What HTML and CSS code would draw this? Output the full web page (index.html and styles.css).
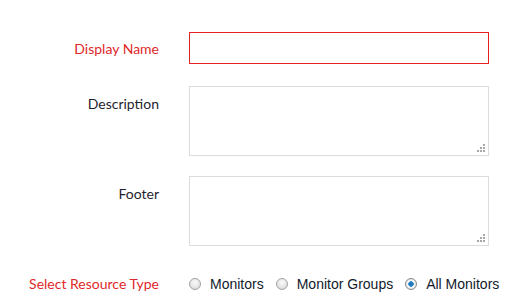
FILE: index.html
```html
<!DOCTYPE html>
<html lang="en">
<head>
    <meta charset="UTF-8">
    <meta name="viewport" content="width=device-width, initial-scale=1.0">
    <title>Status Page Settings</title>
    <link rel="stylesheet" href="styles.css">
</head>
<body>
    <form class="settings-form">
        <label class="field-label required field-label-input" for="display_name">Display Name</label>
        <div class="field">
            <input type="text" id="display_name" name="display_name" class="text-input invalid">
        </div>

        <label class="field-label field-label-area row-description" for="description">Description</label>
        <div class="field area-wrap row-description">
            <textarea id="description" name="description" class="text-area"></textarea>
            <span class="grip"></span>
        </div>

        <label class="field-label field-label-area" for="footer">Footer</label>
        <div class="field area-wrap">
            <textarea id="footer" name="footer" class="text-area"></textarea>
            <span class="grip"></span>
        </div>

        <span class="field-label required field-label-radio row-radio">Select Resource Type</span>
        <div class="field radio-group row-radio">
            <label class="radio-option"><input type="radio" name="resource_type" value="monitors"> Monitors</label>
            <label class="radio-option"><input type="radio" name="resource_type" value="groups"> Monitor Groups</label>
            <label class="radio-option"><input type="radio" name="resource_type" value="all" checked> All Monitors</label>
        </div>
    </form>
</body>
</html>
```

FILE: styles.css
```css
body {
    margin: 0;
    background-color: #fff;
    font-family: Lato, "Open Sans", sans-serif;
    color: #222;
}
.settings-form {
    display: grid;
    grid-template-columns: 159px 300px;
    column-gap: 30px;
    row-gap: 20px;
    padding-top: 32px;
}
.row-description {
    margin-top: 2px;
}
.row-radio {
    margin-top: 8px;
}
.field-label {
    text-align: right;
    font-size: 14px;
    color: #1f2330;
}
.field-label.required {
    color: #e0282a;
}
.field-label-input {
    box-sizing: border-box;
    height: 32px;
    padding-top: 2px;
    line-height: 30px;
}
.field-label-area {
    padding-top: 9px;
}
.field-label-radio {
    line-height: 20px;
}
.text-input {
    display: block;
    box-sizing: border-box;
    width: 300px;
    height: 32px;
    border: 1px solid #ddd;
    margin: 0;
    padding: 4px 8px;
    font-size: 14px;
    outline: none;
}
.text-input.invalid {
    border-color: #e42124;
}
.area-wrap {
    position: relative;
    height: 70px;
}
.text-area {
    display: block;
    box-sizing: border-box;
    width: 300px;
    height: 70px;
    border: 1px solid #dcdcdc;
    margin: 0;
    padding: 4px 8px;
    font-size: 14px;
    outline: none;
    resize: none;
}
.grip {
    position: absolute;
    right: 4px;
    bottom: 4px;
    width: 2px;
    height: 2px;
    background: #a8a8a8;
    box-shadow: -3px 0 #a8a8a8, -6px 0 #a8a8a8, 0 -3px #a8a8a8, -3px -3px #a8a8a8, 0 -6px #a8a8a8;
}
.radio-group {
    display: flex;
    align-items: center;
    gap: 12px;
    height: 20px;
    font-family: "Liberation Sans", Arial, sans-serif;
    font-size: 14px;
    color: #111a2c;
    white-space: nowrap;
}
.radio-option {
    display: flex;
    align-items: center;
    gap: 9px;
}
.radio-option input {
    appearance: none;
    -webkit-appearance: none;
    box-sizing: border-box;
    width: 12px;
    height: 12px;
    margin: 0;
    border: 1px solid #a3a3a3;
    border-radius: 50%;
    background: radial-gradient(circle at 50% 35%, #fafafa 0%, #e4e4e4 60%, #cfcfcf 100%);
}
.radio-option input:checked {
    border-color: #8a8a8a;
    background: radial-gradient(circle, #1f6fb0 0, #2a86c8 2.5px, #fff 3px, #f0f0f0 4px, #d6d6d6 6px);
}
```
